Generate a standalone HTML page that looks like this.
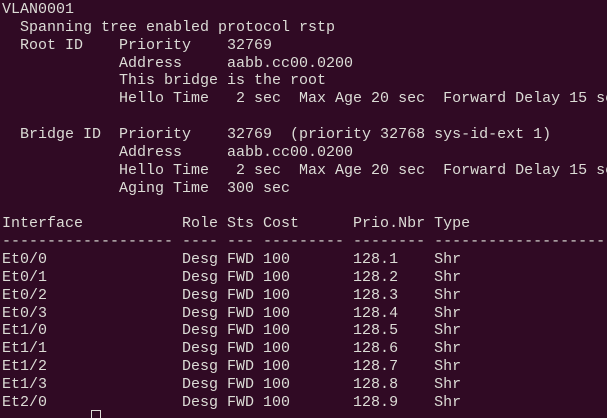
<!DOCTYPE html>
<html><head><style>
html,body{margin:0;padding:0;background:#300a24;width:607px;height:418px;overflow:hidden;position:relative}
pre{margin:0;position:absolute;left:2px;top:1px;width:605px;height:417px;overflow:hidden;font-family:"Liberation Mono",monospace;font-size:15px;line-height:17.86px;color:#dcdcd6;white-space:pre}
.cur{position:absolute;left:91px;top:410px;width:10px;height:12px;border:1px solid #dcdcd6;box-sizing:border-box}
</style></head><body>
<pre>VLAN0001
  Spanning tree enabled protocol rstp
  Root ID    Priority    32769
             Address     aabb.cc00.0200
             This bridge is the root
             Hello Time   2 sec  Max Age 20 sec  Forward Delay 15 sec

  Bridge ID  Priority    32769  (priority 32768 sys-id-ext 1)
             Address     aabb.cc00.0200
             Hello Time   2 sec  Max Age 20 sec  Forward Delay 15 sec
             Aging Time  300 sec

Interface           Role Sts Cost      Prio.Nbr Type
------------------- ---- --- --------- -------- --------------------------------
Et0/0               Desg FWD 100       128.1    Shr
Et0/1               Desg FWD 100       128.2    Shr
Et0/2               Desg FWD 100       128.3    Shr
Et0/3               Desg FWD 100       128.4    Shr
Et1/0               Desg FWD 100       128.5    Shr
Et1/1               Desg FWD 100       128.6    Shr
Et1/2               Desg FWD 100       128.7    Shr
Et1/3               Desg FWD 100       128.8    Shr
Et2/0               Desg FWD 100       128.9    Shr
</pre>
<div class="cur"></div>
</body></html>
